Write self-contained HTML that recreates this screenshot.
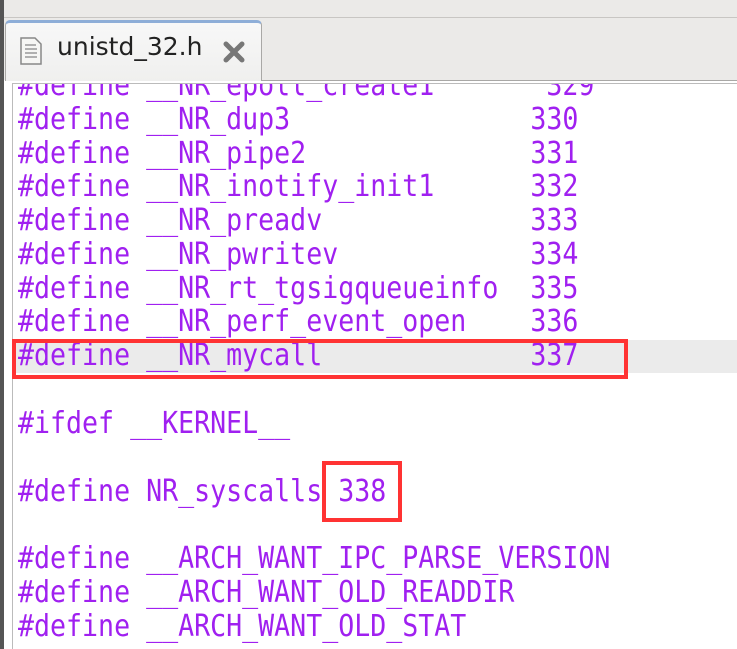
<!DOCTYPE html>
<html><head><style>
body{margin:0;width:737px;height:649px;overflow:hidden;background:#fff;position:relative;font-family:"DejaVu Sans Mono","Liberation Mono",monospace;}
.top{position:absolute;left:0;top:0;width:737px;height:80px;background:#ebeae8;}
.topline{position:absolute;left:0;top:17px;width:737px;height:1px;background:#c8c6c3;}
.lbar{position:absolute;left:0;top:0;width:4px;height:649px;background:#555;}
.tab{position:absolute;left:5px;top:20px;width:257px;height:61px;background:linear-gradient(#f8f8f8,#efefee);border:1px solid #a9a8a6;border-top:3px solid #8eaed8;border-bottom:none;border-radius:5px 5px 0 0;box-sizing:border-box;}
.tabtxt{position:absolute;left:57px;top:32px;font-family:"DejaVu Sans","Liberation Sans",sans-serif;font-size:25px;color:#222;}
.edge{position:absolute;left:262px;top:80px;width:475px;height:1px;background:#a9a8a6;}
.editor{position:absolute;left:12px;top:83px;right:0;bottom:0;border-left:1px solid #bbb;border-top:1px solid #bbb;background:#fff;overflow:hidden;}
.clip{position:absolute;left:13px;top:84px;right:0;bottom:0;overflow:hidden;}
.hl{position:absolute;left:12px;top:340px;width:725px;height:33px;background:#ebebeb;}
.l{position:absolute;left:5px;font-size:26.6px;line-height:34px;color:#a020f0;white-space:pre;transform:scaleY(1.12);transform-origin:50% 50%;}
.box{position:absolute;border:4px solid #f33;box-sizing:border-box;}
</style></head><body>
<div class="top"></div><div class="topline"></div>
<div class="tab"></div>
<svg style="position:absolute;left:18px;top:36px" width="26" height="30"><path d="M3 2h14l6 6v20H3z" fill="#f6f6f4" stroke="#888" stroke-width="1.5"/><path d="M7 9h11M7 13h12M7 17h12M7 21h12" stroke="#999" stroke-width="1.5"/></svg>
<div class="tabtxt">unistd_32.h</div>
<svg style="position:absolute;left:222px;top:40px" width="24" height="24"><path d="M4 4L20 20M20 4L4 20" stroke="#777" stroke-width="5" stroke-linecap="round"/></svg>
<div class="edge"></div>
<div class="editor"></div>
<div class="hl"></div>
<div class="clip">
<div class="l" style="top:-15px">#define __NR_epoll_create1       329</div>
<div class="l" style="top:19px">#define __NR_dup3               330</div>
<div class="l" style="top:53px">#define __NR_pipe2              331</div>
<div class="l" style="top:86px">#define __NR_inotify_init1      332</div>
<div class="l" style="top:120px">#define __NR_preadv             333</div>
<div class="l" style="top:154px">#define __NR_pwritev            334</div>
<div class="l" style="top:188px">#define __NR_rt_tgsigqueueinfo  335</div>
<div class="l" style="top:221px">#define __NR_perf_event_open    336</div>
<div class="l" style="top:255px">#define __NR_mycall             337</div>
<div class="l" style="top:323px">#ifdef __KERNEL__</div>
<div class="l" style="top:391px">#define NR_syscalls 338</div>
<div class="l" style="top:458px">#define __ARCH_WANT_IPC_PARSE_VERSION</div>
<div class="l" style="top:492px">#define __ARCH_WANT_OLD_READDIR</div>
<div class="l" style="top:526px">#define __ARCH_WANT_OLD_STAT</div>
</div>
<div class="lbar"></div>
<div class="box" style="left:12px;top:339px;width:616px;height:40px"></div>
<div class="box" style="left:322px;top:461px;width:80px;height:61px"></div>
</body></html>
